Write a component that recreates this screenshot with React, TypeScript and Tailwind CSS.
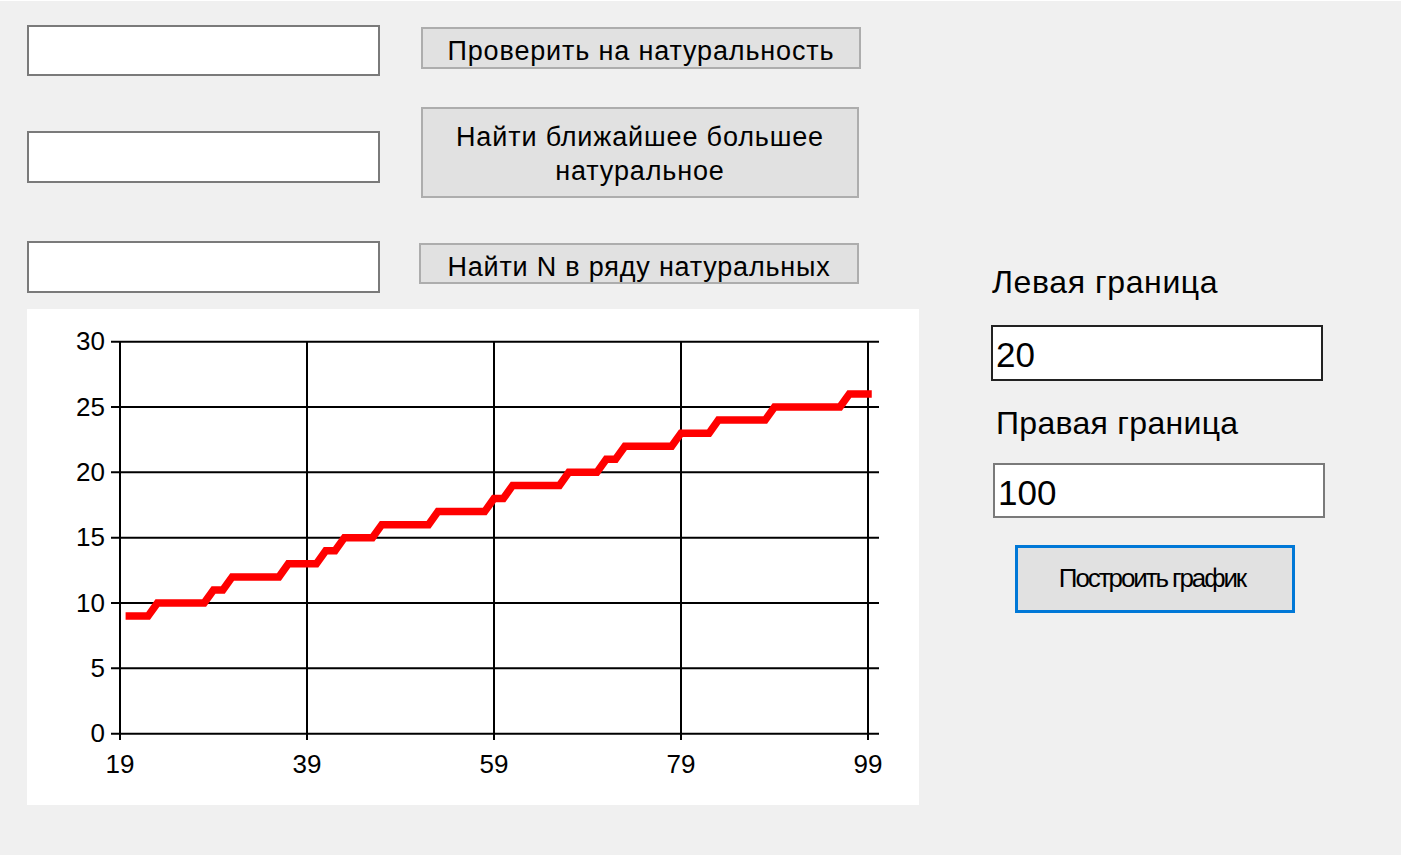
import React from "react";

const font = { fontFamily: '"Liberation Sans", Arial, sans-serif' };

// chart geometry, in px inside the white panel
const X0 = 93;
const XSTEP = 9.35;
const Y0 = 424.7;
const YSTEP = 13.067;

const px = (n: number) => X0 + (n - 19) * XSTEP;
const py = (v: number) => Y0 - v * YSTEP;

const isPrime = (n: number) => {
  if (n < 2) return false;
  for (let i = 2; i * i <= n; i++) if (n % i === 0) return false;
  return true;
};

const data = (() => {
  const pts: [number, number][] = [];
  let count = 1;
  for (let n = 2; n < 100; n++) {
    if (isPrime(n)) count++;
    if (n >= 20) pts.push([n, count]);
  }
  return pts;
})();

const TextBox: React.FC<{ className?: string; value?: string; dark?: boolean }> = ({ className = "", value, dark }) => (
  <div
    className={`bg-white border-2 ${dark ? "border-[#222222]" : "border-[#7a7a7a]"} ${className}`}
  >
    {value && (
      <div className="pl-[3px] pt-[10px] text-[35px] leading-[35px] text-black" style={font}>
        {value}
      </div>
    )}
  </div>
);

const Chart: React.FC = () => {
  const yTicks = [0, 5, 10, 15, 20, 25, 30];
  const xTicks = [19, 39, 59, 79, 99];
  const line = data.map(([n, v]) => `${px(n).toFixed(2)},${py(v).toFixed(2)}`).join(" ");

  return (
    <div className="mt-[16px] w-[892px] h-[496px] bg-white">
      <svg width="892" height="496" viewBox="0 0 892 496" style={font}>
        {yTicks.map((v) => (
          <g key={v}>
            <line x1={84} x2={852} y1={py(v)} y2={py(v)} stroke="#000" strokeWidth={2} />
            <text x={78} y={py(v) + 8.5} textAnchor="end" fontSize={26} fill="#000">
              {v}
            </text>
          </g>
        ))}
        {xTicks.map((n) => (
          <g key={n}>
            <line x1={px(n)} x2={px(n)} y1={py(30)} y2={431} stroke="#000" strokeWidth={2} />
            <text x={px(n)} y={463.5} textAnchor="middle" fontSize={26} fill="#000">
              {n}
            </text>
          </g>
        ))}
        <polyline
          points={line}
          fill="none"
          stroke="#ff0000"
          strokeWidth={7.5}
          strokeLinecap="square"
          strokeLinejoin="miter"
        />
      </svg>
    </div>
  );
};

const App: React.FC = () => {
  return (
    <div className="w-[1403px] h-[855px] bg-white pt-px pr-[2px] overflow-hidden" style={font}>
      <div className="flex h-full bg-[#f0f0f0] text-black">
        {/* left side: inputs, buttons, chart */}
        <div className="ml-[27px] w-[892px]">
          <div className="mt-[24px] flex items-start">
            <TextBox className="w-[353px] h-[51px]" />
            <button className="ml-[41px] mt-[2px] w-[440px] h-[42px] bg-[#e1e1e1] border-2 border-[#adadad] overflow-hidden flex justify-center items-start">
              <span className="mt-[9px] text-[27px] leading-[27px] tracking-[0.85px] whitespace-nowrap">Проверить на натуральность</span>
            </button>
          </div>

          <div className="mt-[31px] flex items-start">
            <TextBox className="mt-[24px] w-[353px] h-[52px]" />
            <button className="ml-[41px] w-[438px] h-[91px] bg-[#e1e1e1] border-2 border-[#adadad] overflow-hidden flex justify-center items-start">
              <span className="mt-[11px] text-[27px] leading-[34px] tracking-[0.85px] text-center">
                Найти ближайшее большее
                <br />
                натуральное
              </span>
            </button>
          </div>

          <div className="mt-[43px] flex items-start">
            <TextBox className="w-[353px] h-[52px]" />
            <button className="ml-[39px] mt-[2px] w-[440px] h-[41px] bg-[#e1e1e1] border-2 border-[#adadad] overflow-hidden flex justify-center items-start">
              <span className="mt-[9px] text-[27px] leading-[27px] tracking-[0.8px] whitespace-nowrap">Найти N в ряду натуральных</span>
            </button>
          </div>

          <Chart />
        </div>

        {/* right side: range and plot button */}
        <div className="ml-[72px] flex flex-col items-start">
          <div className="mt-[265px] pl-px text-[32px] leading-[32px] tracking-[0.6px] whitespace-nowrap">Левая граница</div>
          <TextBox className="mt-[27px] w-[332px] h-[56px]" value="20" dark />
          <div className="mt-[26px] ml-[5px] text-[32px] leading-[32px] tracking-[0.3px] whitespace-nowrap">Правая граница</div>
          <TextBox className="mt-[24px] ml-[2px] w-[332px] h-[55px]" value="100" />
          <button className="mt-[27px] ml-[24px] w-[280px] h-[68px] bg-[#e1e1e1] border-[3px] border-[#0078d7] flex justify-center items-start">
            <span className="mt-[17px] mr-[6px] text-[26px] leading-[26px] tracking-[-2.1px] whitespace-nowrap">Построить график</span>
          </button>
        </div>
      </div>
    </div>
  );
};

export default App;
